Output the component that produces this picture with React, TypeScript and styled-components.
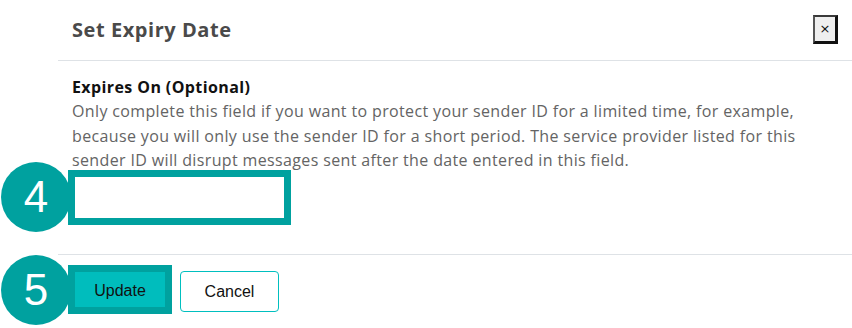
import React from "react";
import styled, { createGlobalStyle } from "styled-components";

const Global = createGlobalStyle`
  html, body { margin: 0; padding: 0; background: #ffffff; }
  body { width: 852px; height: 328px; overflow: hidden; }
  * { box-sizing: border-box; }
`;

const Page = styled.div`
  position: relative;
  width: 852px;
  height: 328px;
  padding-left: 58px;
  background: #fff;
`;

const Modal = styled.div`
  display: flex;
  flex-direction: column;
  height: 100%;
`;

const Header = styled.div`
  display: flex;
  align-items: center;
  justify-content: space-between;
  height: 61px;
  padding: 0 14px 1px 14px;
  border-bottom: 1px solid #dee2e6;
`;

const Title = styled.h5`
  margin: 0;
  font-family: "Open Sans", sans-serif;
  font-weight: 700;
  font-size: 20px;
  color: #4a4a4a;
  letter-spacing: 0.55px;
`;

const CloseButton = styled.button`
  width: 25px;
  height: 29px;
  padding: 0;
  margin-top: -1px;
  background: #efefef;
  border-style: solid;
  border-width: 2px 3px 3px 2px;
  border-color: #3a3a3a #111 #111 #555;
  font-family: "DejaVu Sans", sans-serif;
  font-size: 13px;
  line-height: 1;
  color: #111;
`;

const Body = styled.div`
  padding: 14px 14px 29px 14px;
  border-bottom: 1px solid #dee2e6;
`;

const Label = styled.div`
  font-family: "Open Sans", sans-serif;
  font-weight: 700;
  font-size: 16px;
  line-height: 24px;
  letter-spacing: 0.4px;
  color: #111;
`;

const Help = styled.p`
  margin: 0;
  font-family: "Open Sans", sans-serif;
  font-weight: 400;
  font-size: 16px;
  line-height: 24.5px;
  color: #646464;
  letter-spacing: 0.36px;
`;

const Highlight = styled.div<{ $w: number; $h: number }>`
  width: ${(p) => p.$w}px;
  height: ${(p) => p.$h}px;
  margin: -3px 0 0 -4px;
  border: 7px solid #00a19f;
  display: flex;
`;

const DateInput = styled.input`
  flex: 1;
  min-width: 0;
  border: none;
  outline: none;
  background: #fff;
  font-family: "Open Sans", sans-serif;
  font-size: 15px;
`;

const Footer = styled.div`
  display: flex;
  align-items: flex-start;
  gap: 8px;
  padding: 10px 14px 0 10px;
`;

const UpdateButton = styled.button`
  width: 104px;
  height: 49px;
  border: 7px solid #00a19f;
  background: #00bdbd;
  font-family: "Liberation Sans", Arial, sans-serif;
  font-size: 16px;
  color: #111;
  padding: 4px 0 0 0;
`;

const CancelButton = styled.button`
  margin-top: 6px;
  width: 99px;
  height: 41px;
  border: 1px solid #00bfbf;
  border-radius: 4px;
  background: #fff;
  font-family: "Liberation Sans", Arial, sans-serif;
  font-size: 16px;
  color: #111;
  padding: 1px 0 0 0;
`;

const Step = styled.div<{ $top: number }>`
  position: absolute;
  left: 1px;
  top: ${(p) => p.$top}px;
  width: 70px;
  height: 70px;
  border-radius: 50%;
  background: #00a19f;
  color: #fff;
  display: flex;
  align-items: center;
  justify-content: center;
  font-family: "Liberation Sans", Arial, sans-serif;
  font-size: 44px;
  line-height: 1;
`;

export default function App() {
  return (
    <>
      <Global />
      <Page>
        <Modal>
          <Header>
            <Title>Set Expiry Date</Title>
            <CloseButton aria-label="Close">×</CloseButton>
          </Header>
          <Body>
            <Label>Expires On (Optional)</Label>
            <Help>
              Only complete this field if you want to protect your sender ID for a limited time, for example,
              because you will only use the sender ID for a short period. The service provider listed for this
              sender ID will disrupt messages sent after the date entered in this field.
            </Help>
            <Highlight $w={223} $h={55}>
              <DateInput type="text" />
            </Highlight>
          </Body>
          <Footer>
            <UpdateButton>Update</UpdateButton>
            <CancelButton>Cancel</CancelButton>
          </Footer>
        </Modal>
        <Step $top={162}>4</Step>
        <Step $top={255}>5</Step>
      </Page>
    </>
  );
}
